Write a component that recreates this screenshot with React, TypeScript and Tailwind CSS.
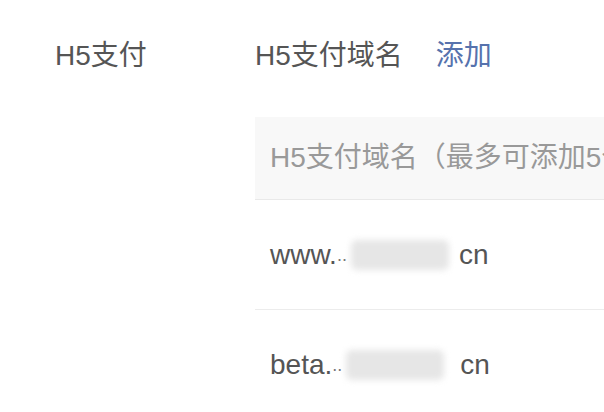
const domains = [
  { prefix: "www.", suffix: "cn", gap: "w-[118px]" },
  { prefix: "beta.", suffix: "cn", gap: "w-[124px]" },
];

export default function App() {
  return (
    <div
      className="h-[412px] w-[604px] overflow-hidden bg-white text-[28px] leading-none text-[#555]"
      style={{ fontFamily: '"Liberation Sans", "Noto Sans CJK SC", sans-serif' }}
    >
      <div className="flex pl-[55px] pt-[36px]">
        {/* Label column */}
        <div className="flex h-[40px] w-[200px] shrink-0 items-center">H5支付</div>

        {/* Content column */}
        <div className="flex w-[520px] shrink-0 flex-col">
          <div className="flex h-[40px] items-center gap-[33px]">
            <span>H5支付域名</span>
            <button className="text-[#5672ad]">添加</button>
          </div>

          <div className="mt-[41px] flex flex-col">
            <div className="flex h-[83px] items-center border-b border-[#e9e9e9] bg-[#f8f8f8] px-[15px] text-[#999] whitespace-nowrap">
              H5支付域名（最多可添加5个）
            </div>
            {domains.map((d, i) => (
              <div
                key={i}
                className={`flex h-[110px] items-center px-[15px] ${
                  i < domains.length - 1 ? "border-b border-[#ececec]" : ""
                }`}
              >
                <span>{d.prefix}</span>
                <span className={`relative flex h-[30px] items-center ${d.gap}`}>
                  <span className="text-[18px] text-[#777]">..</span>
                  <span className="absolute left-[14px] top-[0px] h-[30px] w-[98px] rounded-md bg-[#e6e6e6] blur-[3px]" />
                </span>
                <span className="ml-[4px]">{d.suffix}</span>
              </div>
            ))}
          </div>
        </div>
      </div>
    </div>
  );
}
